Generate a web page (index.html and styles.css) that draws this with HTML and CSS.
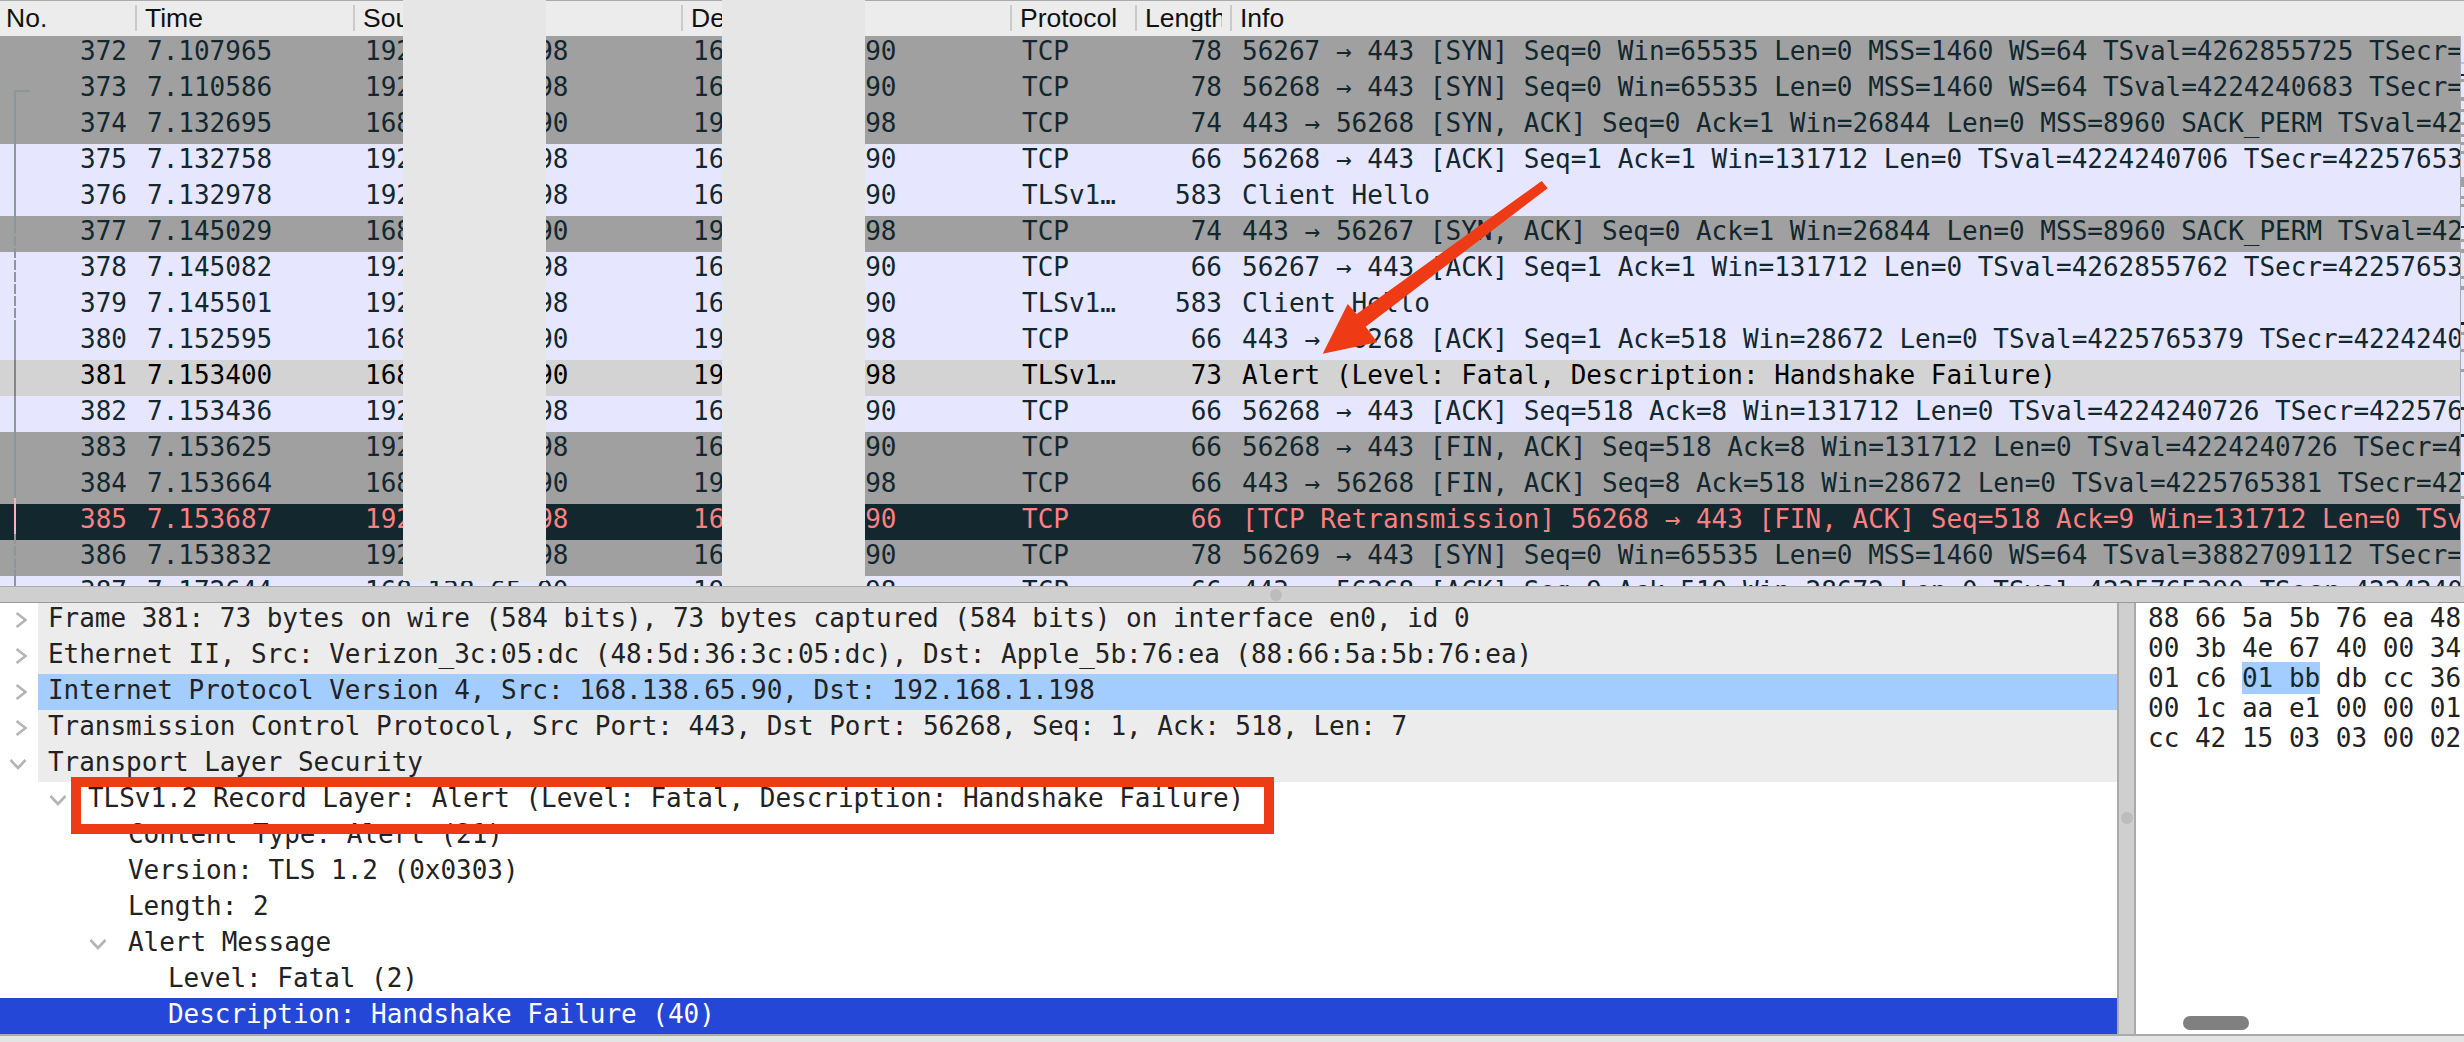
FILE: index.html
```html
<!DOCTYPE html>
<html lang="en">
<head>
<meta charset="utf-8">
<title>Wireshark capture</title>
<link rel="stylesheet" href="styles.css">
</head>
<body>
<div class="page">
  <section class="list">
    <div class="head">
      <div class="hc"><span>No.</span></div><div class="hc"><span>Time</span></div><div class="hc"><span>Source</span></div><div class="hc"><span>Destination</span></div><div class="hc"><span>Protocol</span></div><div class="hc"><span>Length</span></div><div class="hc last"><span>Info</span></div>
    </div>
    <div class="body">
      <div class="rows">
        <div class="row gray"><div class="num">372</div><div>7.107965</div><div>192.168.1.198</div><div>168.138.65.90</div><div>TCP</div><div class="num">78</div><div>56267 → 443 [SYN] Seq=0 Win=65535 Len=0 MSS=1460 WS=64 TSval=4262855725 TSecr=0 SACK_PERM</div></div>
        <div class="row gray"><div class="num">373</div><div>7.110586</div><div>192.168.1.198</div><div>168.138.65.90</div><div>TCP</div><div class="num">78</div><div>56268 → 443 [SYN] Seq=0 Win=65535 Len=0 MSS=1460 WS=64 TSval=4224240683 TSecr=0 SACK_PERM</div></div>
        <div class="row gray"><div class="num">374</div><div>7.132695</div><div>168.138.65.90</div><div>192.168.1.198</div><div>TCP</div><div class="num">74</div><div>443 → 56268 [SYN, ACK] Seq=0 Ack=1 Win=26844 Len=0 MSS=8960 SACK_PERM TSval=4225765353</div></div>
        <div class="row lav"><div class="num">375</div><div>7.132758</div><div>192.168.1.198</div><div>168.138.65.90</div><div>TCP</div><div class="num">66</div><div>56268 → 443 [ACK] Seq=1 Ack=1 Win=131712 Len=0 TSval=4224240706 TSecr=4225765353</div></div>
        <div class="row lav"><div class="num">376</div><div>7.132978</div><div>192.168.1.198</div><div>168.138.65.90</div><div>TLSv1…</div><div class="num">583</div><div>Client Hello</div></div>
        <div class="row gray"><div class="num">377</div><div>7.145029</div><div>168.138.65.90</div><div>192.168.1.198</div><div>TCP</div><div class="num">74</div><div>443 → 56267 [SYN, ACK] Seq=0 Ack=1 Win=26844 Len=0 MSS=8960 SACK_PERM TSval=4225765365</div></div>
        <div class="row lav"><div class="num">378</div><div>7.145082</div><div>192.168.1.198</div><div>168.138.65.90</div><div>TCP</div><div class="num">66</div><div>56267 → 443 [ACK] Seq=1 Ack=1 Win=131712 Len=0 TSval=4262855762 TSecr=4225765365</div></div>
        <div class="row lav"><div class="num">379</div><div>7.145501</div><div>192.168.1.198</div><div>168.138.65.90</div><div>TLSv1…</div><div class="num">583</div><div>Client Hello</div></div>
        <div class="row lav"><div class="num">380</div><div>7.152595</div><div>168.138.65.90</div><div>192.168.1.198</div><div>TCP</div><div class="num">66</div><div>443 → 56268 [ACK] Seq=1 Ack=518 Win=28672 Len=0 TSval=4225765379 TSecr=4224240706</div></div>
        <div class="row cur"><div class="num">381</div><div>7.153400</div><div>168.138.65.90</div><div>192.168.1.198</div><div>TLSv1…</div><div class="num">73</div><div>Alert (Level: Fatal, Description: Handshake Failure)</div></div>
        <div class="row lav"><div class="num">382</div><div>7.153436</div><div>192.168.1.198</div><div>168.138.65.90</div><div>TCP</div><div class="num">66</div><div>56268 → 443 [ACK] Seq=518 Ack=8 Win=131712 Len=0 TSval=4224240726 TSecr=4225765380</div></div>
        <div class="row gray"><div class="num">383</div><div>7.153625</div><div>192.168.1.198</div><div>168.138.65.90</div><div>TCP</div><div class="num">66</div><div>56268 → 443 [FIN, ACK] Seq=518 Ack=8 Win=131712 Len=0 TSval=4224240726 TSecr=4225765380</div></div>
        <div class="row gray"><div class="num">384</div><div>7.153664</div><div>168.138.65.90</div><div>192.168.1.198</div><div>TCP</div><div class="num">66</div><div>443 → 56268 [FIN, ACK] Seq=8 Ack=518 Win=28672 Len=0 TSval=4225765381 TSecr=4224240706</div></div>
        <div class="row dark"><div class="num">385</div><div>7.153687</div><div>192.168.1.198</div><div>168.138.65.90</div><div>TCP</div><div class="num">66</div><div>[TCP Retransmission] 56268 → 443 [FIN, ACK] Seq=518 Ack=9 Win=131712 Len=0 TSval=4224240726</div></div>
        <div class="row gray"><div class="num">386</div><div>7.153832</div><div>192.168.1.198</div><div>168.138.65.90</div><div>TCP</div><div class="num">78</div><div>56269 → 443 [SYN] Seq=0 Win=65535 Len=0 MSS=1460 WS=64 TSval=3882709112 TSecr=0 SACK_PERM</div></div>
        <div class="row lav"><div class="num">387</div><div>7.172644</div><div>168.138.65.90</div><div>192.168.1.198</div><div>TCP</div><div class="num">66</div><div>443 → 56268 [ACK] Seq=9 Ack=519 Win=28672 Len=0 TSval=4225765390 TSecr=4224240726</div></div>
      </div>
      <div class="map"></div>
    </div>
  </section>

  <div class="hsplit"><i class="grip"></i></div>

  <section class="bottom">
    <div class="detail">
      <div class="d l0"><div class="gut"><svg class="chev-r" viewBox="0 0 12 18"><path d="M1.5 2l9 7-9 7"/></svg></div><div class="txt">Frame 381: 73 bytes on wire (584 bits), 73 bytes captured (584 bits) on interface en0, id 0</div></div>
      <div class="d l0"><div class="gut"><svg class="chev-r" viewBox="0 0 12 18"><path d="M1.5 2l9 7-9 7"/></svg></div><div class="txt">Ethernet II, Src: Verizon_3c:05:dc (48:5d:36:3c:05:dc), Dst: Apple_5b:76:ea (88:66:5a:5b:76:ea)</div></div>
      <div class="d l0 hi"><div class="gut"><svg class="chev-r" viewBox="0 0 12 18"><path d="M1.5 2l9 7-9 7"/></svg></div><div class="txt">Internet Protocol Version 4, Src: 168.138.65.90, Dst: 192.168.1.198</div></div>
      <div class="d l0"><div class="gut"><svg class="chev-r" viewBox="0 0 12 18"><path d="M1.5 2l9 7-9 7"/></svg></div><div class="txt">Transmission Control Protocol, Src Port: 443, Dst Port: 56268, Seq: 1, Ack: 518, Len: 7</div></div>
      <div class="d l0"><div class="gut"><svg class="chev-d" viewBox="0 0 18 12"><path d="M1.5 2l7.5 8 7.500-8"/></svg></div><div class="txt">Transport Layer Security</div></div>
      <div class="d l1"><div class="gut"><svg class="chev-d" viewBox="0 0 18 12"><path d="M1.5 2l7.5 8 7.500-8"/></svg></div><div class="txt">TLSv1.2 Record Layer: Alert (Level: Fatal, Description: Handshake Failure)</div></div>
      <div class="d l2"><div class="gut"></div><div class="txt">Content Type: Alert (21)</div></div>
      <div class="d l2"><div class="gut"></div><div class="txt">Version: TLS 1.2 (0x0303)</div></div>
      <div class="d l2"><div class="gut"></div><div class="txt">Length: 2</div></div>
      <div class="d l2"><div class="gut"><svg class="chev-d" viewBox="0 0 18 12"><path d="M1.5 2l7.5 8 7.500-8"/></svg></div><div class="txt">Alert Message</div></div>
      <div class="d l3"><div class="gut"></div><div class="txt">Level: Fatal (2)</div></div>
      <div class="d l3 sel"><div class="gut"></div><div class="txt">Description: Handshake Failure (40)</div></div>
    </div>
    <div class="vsplit"><i class="grip"></i></div>
    <div class="hex">
      <div class="hl">88 66 5a 5b 76 ea 48</div>
      <div class="hl">00 3b 4e 67 40 00 34</div>
      <div class="hl">01 c6 <span class="mark">01 bb</span> db cc 36</div>
      <div class="hl">00 1c aa e1 00 00 01</div>
      <div class="hl">cc 42 15 03 03 00 02</div>
      <i class="thumb"></i>
    </div>
  </section>
  <div class="foot"></div>

  <div class="mask mask-src"></div>
  <div class="mask mask-dst"></div>

  <svg class="marks" width="2464" height="1042" viewBox="0 0 2464 1042">
    <path class="conv" d="M30 91H15V224"/>
    <path class="conv dash" d="M15 224V320"/>
    <path class="conv" d="M15 320V360"/>
    <path class="conv cur-seg" d="M15 360V396"/>
    <path class="conv" d="M15 396V498"/>
    <path class="conv pink" d="M15 498V534"/>
    <path class="conv dash" d="M15 534V576"/>
    <path class="conv" d="M15 569V586"/>
    <rect class="box" x="76" y="782" width="1193" height="47"/>
    <polygon class="arrow" points="1541.7,181 1547.7,188.3 1365.7,326.7 1377.3,342.3 1322.7,353.7 1347.7,304 1356.7,314"/>
  </svg>
</div>
</body>
</html>
```
FILE: styles.css
```css
* { box-sizing: border-box; }
html, body { margin: 0; padding: 0; }
body { width: 2464px; height: 1042px; overflow: hidden; background: #fff; }

.page {
  position: relative;
  width: 2464px;
  height: 1042px;
  overflow: hidden;
  display: flex;
  flex-direction: column;
  font-family: "DejaVu Sans Mono", "Liberation Mono", monospace;
  font-size: 26px;
  color: #12272e;
}

/* packet list */
.list { height: 586px; display: flex; flex-direction: column; }
.head,
.row {
  display: grid;
  grid-template-columns: 137px 218px 328px 329px 125px 95px 1fr;
}
.head {
  height: 36px;
  border-top: 1px solid #aaa;
  background: #ececec;
  font-family: "Liberation Sans", Arial, sans-serif;
  font-size: 26.5px;
  color: #111;
}
.hc {
  height: 26px;
  margin-top: 4px;
  padding: 0 8px;
  border-right: 2px solid #cacaca;
  line-height: 26px;
}
.hc:first-child { padding-left: 6px; }
.hc.last { border-right: 0; }
.hc span { display: block; overflow: hidden; white-space: nowrap; }

.body { flex: 1; display: flex; min-height: 0; }
.rows { flex: 1; min-width: 0; overflow: hidden; }
.row { height: 36px; line-height: 30px; white-space: pre; }
.row > div { padding: 0 10px; overflow: hidden; }
.row > .num { text-align: right; }
.gray { background: #a0a0a0; }
.lav { background: #e6e6fe; }
.cur { background: #d3d3d3; color: #000; }
.dark { background: #12272e; color: #ff8080; }

.map {
  width: 4px;
  border-left: 1px solid #aaa;
  background: linear-gradient(to bottom,
    #e6e6fe 26px, #a3ccff 26px 28px, #e6e6fe 28px 38px, #12272e 38px 40px, #e6e6fe 40px 43px,
    #a0a0a0 43px 46px, #e6e6fe 46px 61px, #a0a0a0 61px 65px, #e6e6fe 65px 73px, #a0a0a0 73px 76px,
    #e6e6fe 76px 86px, #a0a0a0 86px 89px, #e6e6fe 89px 98px, #a0a0a0 98px 101px, #e6e6fe 101px 106px,
    #a0a0a0 106px 109px, #e6e6fe 109px 115px, #a0a0a0 115px 118px, #e6e6fe 118px 141px,
    #a0a0a0 141px 151px, #e6e6fe 151px 160px, #a0a0a0 160px 163px, #e6e6fe 163px 168px,
    #a0a0a0 168px 171px, #e6e6fe 171px 190px, #12272e 190px 192px, #e6e6fe 192px 203px,
    #a0a0a0 203px 206px, #e6e6fe 206px 213px, #a0a0a0 213px 217px, #e6e6fe 217px 240px,
    #a0a0a0 240px 243px, #e6e6fe 243px 250px, #a0a0a0 250px 254px, #e6e6fe 254px 286px,
    #12272e 286px 289px, #e6e6fe 289px 296px, #a0a0a0 296px 299px, #e6e6fe 299px 313px,
    #a0a0a0 313px 316px, #e6e6fe 316px 333px, #a0a0a0 333px 336px, #e6e6fe 336px 371px,
    #12272e 371px 374px, #e6e6fe 374px 398px, #12272e 398px 401px, #e6e6fe 401px 436px,
    #12272e 436px 439px, #e6e6fe 439px 460px, #a0a0a0 460px 463px, #e6e6fe 463px);
}

/* splitters */
.hsplit {
  position: relative;
  z-index: 1;
  height: 17px;
  margin-bottom: -1px;
  border-top: 1px solid #aaa;
  border-bottom: 1px solid #999;
  background: #cfcfcf;
  display: flex;
  justify-content: center;
  align-items: center;
}
.hsplit .grip { margin-left: 88px; }
.grip { display: block; width: 12px; height: 12px; border-radius: 50%; background: #bcbcbc; }

/* lower panes */
.bottom { height: 432px; display: flex; color: #222; }
.detail { width: 2119px; border-right: 2px solid #aaa; overflow: hidden; letter-spacing: -0.03px; }
.d { display: flex; height: 36px; line-height: 32px; white-space: pre; }
.gut { display: flex; justify-content: flex-end; align-items: center; flex: none; padding-right: 11px; }
.l0 .gut { width: 38px; }
.l1 .gut { width: 78px; }
.l2 .gut { width: 118px; }
.l3 .gut { width: 158px; }
.txt { flex: 1; padding-left: 10px; }
.l0 .txt { background: #ececec; }
.hi .txt { background: #a3ccff; }
.sel { background: #2547d8; }
.sel .txt { color: #fff; }
.gut svg { fill: none; stroke: #b4b4b4; stroke-width: 2.6; }
.chev-r { width: 12px; height: 18px; }
.chev-d { width: 18px; height: 12px; }

.vsplit {
  width: 15px;
  background: #cfcfcf;
  display: flex;
  justify-content: center;
  align-items: center;
}
.hex {
  position: relative;
  flex: 1;
  padding: 1px 0 0 12px;
  border-left: 2px solid #aaa;
  overflow: hidden;
}
.hl { height: 30px; line-height: 30px; white-space: pre; }
.mark { background: #a3ccff; color: #12272e; padding: 1px 0; }
.thumb {
  position: absolute;
  left: 47px;
  bottom: 4px;
  width: 66px;
  height: 14px;
  border-radius: 7px;
  background: #808080;
}
.foot { flex: 1; border-top: 2px solid #aaa; background: #e4e4e4; }

/* overlays: blacked-out addresses and annotation marks */
.mask { position: absolute; top: 0; background: #e6e6e6; }
.mask-src { left: 403px; width: 143px; height: 581px; }
.mask-dst { left: 722px; width: 143px; height: 592px; }
.marks { position: absolute; left: 0; top: 0; }
.conv { fill: none; stroke: #8a979d; stroke-width: 2; }
.dash { stroke-dasharray: 10 2; }
.cur-seg { stroke: #858585; }
.pink { stroke: #f4b6b6; }
.box { fill: none; stroke: #ee3b16; stroke-width: 10; }
.arrow { fill: #ee3b16; }
```
